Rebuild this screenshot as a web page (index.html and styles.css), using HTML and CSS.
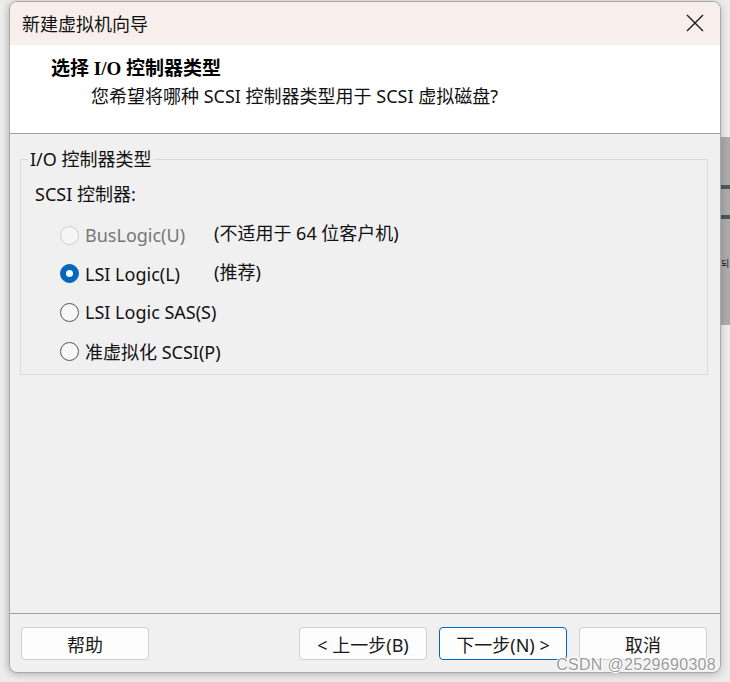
FILE: index.html
```html
<!DOCTYPE html>
<html lang="zh-CN">
<head>
<meta charset="utf-8">
<title>新建虚拟机向导</title>
<link rel="stylesheet" href="styles.css">
</head>
<body>
<div class="behind">
  <div class="bar bar1"></div>
  <div class="bar bar2"></div>
  <span class="behind-char">되</span>
</div>
<div class="window">
  <div class="titlebar">
    <span class="title">新建虚拟机向导</span>
    <svg class="close" width="18" height="18" viewBox="0 0 18 18"><path d="M1 1 L17 17 M17 1 L1 17" stroke="#1a1a1a" stroke-width="1.4" fill="none"/></svg>
  </div>
  <div class="header">
    <div class="h-title">选择 I/O 控制器类型</div>
    <div class="h-sub">您希望将哪种 SCSI 控制器类型用于 SCSI 虚拟磁盘?</div>
  </div>
  <div class="body">
    <fieldset class="group">
      <legend class="legend">I/O 控制器类型</legend>
      <div class="group-label">SCSI 控制器:</div>
      <div class="options">
        <div class="opt disabled"><span class="radio"></span><span class="lbl">BusLogic(U)</span></div>
        <div class="note">(不适用于 64 位客户机)</div>
        <div class="opt"><span class="radio checked"></span><span class="lbl">LSI Logic(L)</span></div>
        <div class="note">(推荐)</div>
        <div class="opt"><span class="radio"></span><span class="lbl">LSI Logic SAS(S)</span></div>
        <div class="note"></div>
        <div class="opt"><span class="radio"></span><span class="lbl">准虚拟化 SCSI(P)</span></div>
        <div class="note"></div>
      </div>
    </fieldset>
  </div>
  <div class="footer">
    <button class="btn">帮助</button>
    <div class="spacer"></div>
    <button class="btn">&lt; 上一步(<b>B</b>)</button>
    <button class="btn primary">下一步(<b>N</b>) &gt;</button>
    <button class="btn">取消</button>
  </div>
</div>
<div class="watermark">CSDN @2529690308</div>
</body>
</html>
```

FILE: styles.css
```css
html, body {
  margin: 0;
  padding: 0;
}
body {
  width: 730px;
  height: 682px;
  background: #ececec;
  overflow: hidden;
  position: relative;
  font-family: "Noto Sans", "Noto Sans CJK SC", sans-serif;
  color: #1a1a1a;
}
.behind {
  position: absolute;
  left: 716px;
  top: 137px;
  width: 14px;
  height: 188px;
  background: #ababab;
}
.bar {
  position: absolute;
  left: 0;
  right: 0;
  height: 4px;
  background: #4b5661;
}
.bar1 { top: 48px; }
.bar2 { top: 78px; }
.behind-char {
  position: absolute;
  left: 5px;
  top: 122px;
  font-family: "Noto Sans CJK KR", sans-serif;
  font-size: 9px;
  line-height: 10px;
  color: #222;
}
.window {
  position: absolute;
  left: 9px;
  top: 1px;
  width: 710px;
  height: 670px;
  border: 1px solid #a9a9a9;
  border-radius: 8px;
  background: #f0f0f0;
  overflow: hidden;
  display: flex;
  flex-direction: column;
  box-shadow: 0 2px 8px rgba(0,0,0,0.18), -2px 0 6px rgba(0,0,0,0.08);
}
.titlebar {
  height: 43px;
  background: #f8efed;
  display: flex;
  align-items: center;
  justify-content: space-between;
  padding: 0 16px 0 12px;
  flex: none;
  box-sizing: border-box;
}
.title {
  font-family: "Noto Sans CJK SC", sans-serif;
  font-size: 18px;
  color: #111;
  position: relative;
  top: -1px;
}
.close {
  display: block;
  position: relative;
  top: -1px;
}
.header {
  height: 89px;
  background: #ffffff;
  border-bottom: 1px solid #a0a0a0;
  flex: none;
  box-sizing: border-box;
  padding: 12px 0 0 41px;
}
.h-title {
  font-family: "Liberation Serif", "Noto Sans CJK SC", serif;
  font-weight: bold;
  font-size: 19px;
  line-height: 24px;
  color: #000;
}
.h-sub {
  font-family: "Noto Sans", "Noto Sans CJK SC", sans-serif;
  font-size: 18px;
  line-height: 24px;
  margin-top: 3px;
  padding-left: 40px;
  color: #111;
}
.body {
  flex: 1;
  padding: 14px 12px 0 10px;
  border-bottom: 1px solid #a0a0a0;
}
.group {
  margin: 0;
  padding: 0 0 6px 14px;
  border: 1px solid #dadada;
  height: 227px;
  box-sizing: border-box;
}
.legend {
  font-family: "Noto Sans", "Noto Sans CJK SC", sans-serif;
  font-size: 18px;
  line-height: 22px;
  padding: 0 2px;
  margin-left: -7px;
  color: #111;
}
.group-label {
  font-size: 18px;
  line-height: 24px;
  margin-top: 12px;
  color: #111;
}
.options {
  display: grid;
  grid-template-columns: 154px 1fr;
  grid-auto-rows: 38.6px;
  margin-top: 10px;
  padding-left: 25px;
  align-items: center;
}
.opt {
  display: flex;
  align-items: center;
  gap: 6px;
  font-size: 18px;
  white-space: nowrap;
}
.opt .lbl { color: #111; }
.radio {
  width: 19px;
  height: 19px;
  border-radius: 50%;
  border: 1px solid #555;
  background: #f7f7f7;
  box-sizing: border-box;
  position: relative;
  flex: none;
}
.radio.checked {
  background: #0067c0;
  border-color: #0067c0;
}
.radio.checked::after {
  content: "";
  position: absolute;
  left: 5px;
  top: 5px;
  width: 7px;
  height: 7px;
  border-radius: 50%;
  background: #fff;
}
.disabled .radio {
  border-color: #cfcfcf;
  background: #f5f5f5;
}
.disabled .lbl { color: #777; }
.note {
  font-size: 18px;
  color: #111;
  position: relative;
  top: -3px;
  white-space: nowrap;
}
.footer {
  height: 58px;
  flex: none;
  display: flex;
  align-items: flex-start;
  padding: 13px 13px 0 11px;
  gap: 12px;
  box-sizing: border-box;
}
.spacer { flex: 1; }
.btn {
  width: 128px;
  height: 33px;
  border: 1px solid #d0d0d0;
  border-radius: 4px;
  background: #fdfdfd;
  font-family: "Noto Sans", "Noto Sans CJK SC", sans-serif;
  font-size: 18px;
  color: #1a1a1a;
  padding: 0;
}
.btn b {
  font-weight: normal;
}
.btn.primary {
  border-color: #0067c0;
}
.watermark {
  position: absolute;
  right: 14px;
  top: 655px;
  font-family: "Liberation Sans", sans-serif;
  font-size: 16px;
  line-height: 20px;
  color: #9a9a9a;
  text-shadow: 1px 0 0 #fff, -1px 0 0 #fff, 0 1px 0 #fff, 0 -1px 0 #fff;
  letter-spacing: 0.3px;
}
```
